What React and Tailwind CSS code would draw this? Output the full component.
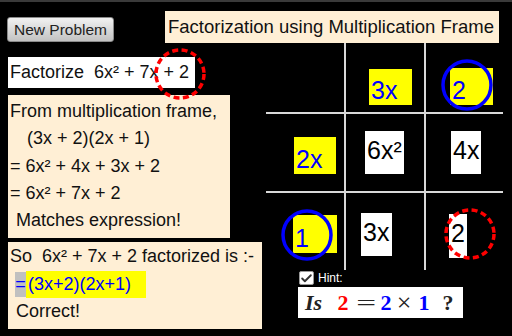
import { Check } from "lucide-react";

const Ring = ({ color, dashed, className }) => (
  <svg
    width="60"
    height="60"
    viewBox="0 0 60 60"
    className={`absolute pointer-events-none ${className}`}
  >
    <circle
      cx="30"
      cy="30"
      r="24"
      fill="none"
      stroke={color}
      strokeWidth="3.5"
      strokeDasharray={dashed ? "6 3.5" : undefined}
    />
  </svg>
);

// frame cells, row by row; first cell is the empty corner
const cells = [
  null,
  { text: "3x", yellow: true, cell: "pl-[23px] pt-[26px]", box: "w-[43px] h-[36px]" },
  {
    text: "2",
    yellow: true,
    cell: "pl-[24px] pt-[25px]",
    box: "w-[43px] h-[37px]",
    ring: <Ring color="#0000ff" className="left-[-13px] top-[-13px]" />,
  },
  { text: "2x", yellow: true, cell: "pl-[28px] pt-[23px]", box: "w-[42px] h-[37px]" },
  { text: "6x²", cell: "pl-[19px] pt-[17px]", box: "w-[39px] h-[43px]" },
  { text: "4x", cell: "pl-[25px] pt-[17px]", box: "w-[30px] h-[43px]" },
  {
    text: "1",
    yellow: true,
    cell: "pl-[27px] pt-[22px]",
    box: "w-[44px] h-[38px]",
    ring: <Ring color="#0000ff" className="left-[-16px] top-[-10px]" />,
  },
  { text: "3x", cell: "pl-[15px] pt-[20px]", box: "w-[31px] h-[43px]" },
  {
    text: "2",
    cell: "pl-[23px] pt-[21px]",
    box: "w-[18px] h-[44px]",
    ring: <Ring color="#ff0000" dashed className="left-[-9px] top-[-10px]" />,
  },
];

const App = () => {
  return (
    <div className="w-[512px] h-[336px] bg-black overflow-hidden font-['Liberation_Sans',Arial,sans-serif] text-[#111]">
      <div className="h-[2px] bg-[#3a3a3a]"></div>

      {/* top row */}
      <div className="flex items-start h-[41px] pl-[7px]">
        <button className="mt-[15px] w-[107px] h-[25px] rounded-[3px] border border-[#8a8a8a] bg-linear-to-b from-[#f2f2f2] to-[#c2c2c2] text-[15.5px] text-[#222] flex items-center justify-center">
          New Problem
        </button>
        <div className="ml-[51px] mt-[9px] w-[334px] h-[32px] bg-[#ffefd5] flex items-center pl-[3px] text-[18.5px] whitespace-nowrap">
          Factorization using Multiplication Frame
        </div>
      </div>

      <div className="flex items-start pl-[8px]">
        {/* left: working */}
        <div className="w-[254px] flex flex-col text-[18px]">
          <div className="relative mt-[14px] w-[187px] h-[31px] bg-white flex items-center pl-[2px] whitespace-pre">
            Factorize  6x² + 7x + 2
            <Ring color="#ff0000" dashed className="left-[142px] top-[-13px]" />
          </div>

          <div className="mt-[7px] w-[222px] h-[143px] bg-[#ffefd5] pl-[2px] pt-[3px] leading-[27.3px] whitespace-pre">
            <div>From multiplication frame,</div>
            <div className="pl-[17px]">(3x + 2)(2x + 1)</div>
            <div>= 6x² + 4x + 3x + 2</div>
            <div>= 6x² + 7x + 2</div>
            <div className="pl-[6px]">Matches expression!</div>
          </div>

          <div className="mt-[4px] w-[254px] h-[87px] bg-[#ffefd5] pl-[2px] pt-[1px] leading-[27.5px] whitespace-pre">
            <div>So  6x² + 7x + 2 factorized is :-</div>
            <div className="flex items-center h-[27.5px] pl-[5px] text-[#0000ff]">
              <span className="w-[11px] h-[25px] bg-[#c0c0c0] flex items-center justify-center">=</span>
              <span className="w-[120px] h-[27px] bg-[#ffff00] flex items-center pl-[2px]">(3x+2)(2x+1)</span>
            </div>
            <div className="pl-[6px]">Correct!</div>
          </div>
        </div>

        {/* right: multiplication frame */}
        <div className="ml-[4px] w-[237px] flex flex-col">
          <div className="grid grid-cols-[80px_80px_77px] grid-rows-[71px_79px_77px]">
            {cells.map((c, i) => (
              <div
                key={i}
                className={`border-[#d8d8d8] ${i % 3 < 2 ? "border-r-2" : ""} ${i < 6 ? "border-b-2" : ""} ${c ? c.cell : ""}`}
              >
                {c && (
                  <div
                    className={`relative flex pl-[2px] text-[25px] leading-[1.15] ${c.box} ${
                      c.yellow ? "bg-[#ffff00] text-[#0000ff] items-end" : "bg-white text-black items-start pt-[5px]"
                    }`}
                  >
                    {c.text}
                    {c.ring}
                  </div>
                )}
              </div>
            ))}
          </div>

          <div className="ml-[33px] mt-[1px] h-[14px] flex items-center gap-[4px]">
            <div className="w-[15px] h-[14px] bg-white border border-[#999] rounded-[2px] flex items-center justify-center">
              <Check className="w-[13px] h-[13px] text-[#333]" strokeWidth={3.5} />
            </div>
            <span className="text-white text-[12px]">Hint:</span>
          </div>

          <div className="ml-[32px] mt-[2px] w-[165px] h-[31px] bg-white flex items-center pl-[7px] font-['Liberation_Serif',serif] text-[22px] text-[#222] whitespace-pre">
            <span className="w-[22px] italic font-bold">Is</span>
            <span className="ml-[9px] w-[14px] text-center font-bold text-[#ff0000]">2</span>
            <span className="ml-[4px] w-[24px] flex justify-center">
              <span className="inline-block scale-x-[1.6] text-[22px]">=</span>
            </span>
            <span className="ml-[1px] w-[14px] text-center font-bold text-[#0000ff]">2</span>
            <span className="ml-[3px] w-[16px] text-center text-[26px] leading-none">×</span>
            <span className="ml-[5px] w-[14px] text-center font-bold text-[#0000ff]">1</span>
            <span className="ml-[11px] w-[12px] text-center font-bold">?</span>
          </div>
        </div>
      </div>
    </div>
  );
};

export default App;
